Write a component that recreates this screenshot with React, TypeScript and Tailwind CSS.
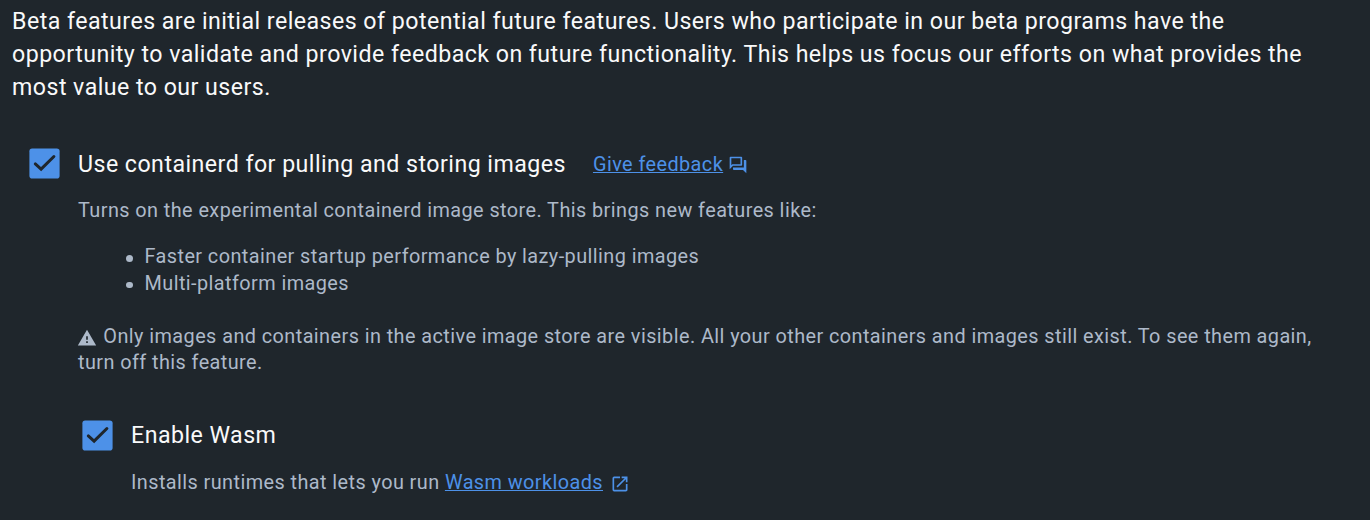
import { MdOutlineQuestionAnswer, MdWarning, MdOpenInNew } from 'react-icons/md';

function CheckedBox() {
  return (
    <svg viewBox="0 0 31 31" className="size-[31px] shrink-0" role="checkbox" aria-checked="true">
      <rect x="0.4" y="0.4" width="30.2" height="30.2" rx="2.8" fill="#4d91e8" />
      <path d="M6.3 15.9 12.1 21.1 24.9 8.5" fill="none" stroke="#1f262c" strokeWidth="3" strokeLinecap="round" />
    </svg>
  );
}

function Bullet({ children }: { children: string }) {
  return (
    <li className="flex items-center">
      <span className="mr-[12px] mt-[2px] size-[6.5px] rounded-full bg-[#adb9c9]" />
      {children}
    </li>
  );
}

export default function App() {
  return (
    <main className="h-[520px] w-[1370px] overflow-hidden bg-[#1f262c] font-['Roboto',sans-serif] text-[19.87px] leading-[26.5px] tracking-[0.426px] text-[#adb9c9]">
      <p className="w-[1340px] pl-3 pt-[5px] text-[23.18px] leading-[33.1px] tracking-[0.46px] text-[#f9f9fa]">
        Beta features are initial releases of potential future features. Users who participate in our beta programs have the<br />
        opportunity to validate and provide feedback on future functionality. This helps us focus our efforts on what provides the<br />
        most value to our users.
      </p>
      <section className="mt-[39.7px] pl-[29px]">
        <div className="flex h-10 items-center">
          <CheckedBox />
          <h2 className="ml-[18px] whitespace-nowrap text-[23.18px] tracking-[0.46px] text-[#f9f9fa]">Use containerd for pulling and storing images</h2>
          <a href="#" className="ml-[27px] flex items-center pt-[2px] text-[#4d91e8]"><span className="underline decoration-1 underline-offset-1">Give feedback</span><MdOutlineQuestionAnswer className="ml-[5px] size-5" /></a>
        </div>
        <div className="pl-[49px]">
          <p className="mt-[14px]">Turns on the experimental containerd image store. This brings new features like:</p>
          <ul className="mt-5 pl-[48px]">
            <Bullet>Faster container startup performance by lazy-pulling images</Bullet>
            <Bullet>Multi-platform images</Bullet>
          </ul>
          <p className="mt-[26.5px]"><MdWarning className="-ml-[0.6px] mr-[0.6px] inline size-5" /> Only images and containers in the active image store are visible. All your other containers and images still exist. To see them again,<br />turn off this feature.</p>
          <div className="mt-[38.7px] flex h-10 items-center pl-[4px]">
            <CheckedBox />
            <h2 className="ml-[18px] text-[23.18px] tracking-[0.46px] text-[#f9f9fa]">Enable Wasm</h2>
          </div>
          <p className="mt-[14.6px] flex items-center whitespace-pre pl-[53px]">Installs runtimes that lets you run <a href="#" className="flex items-center text-[#4d91e8]"><span className="underline decoration-1 underline-offset-1">Wasm workloads</span><MdOpenInNew className="ml-[6.8px] mt-[1px] size-5" /></a></p>
        </div>
      </section>
    </main>
  );
}
